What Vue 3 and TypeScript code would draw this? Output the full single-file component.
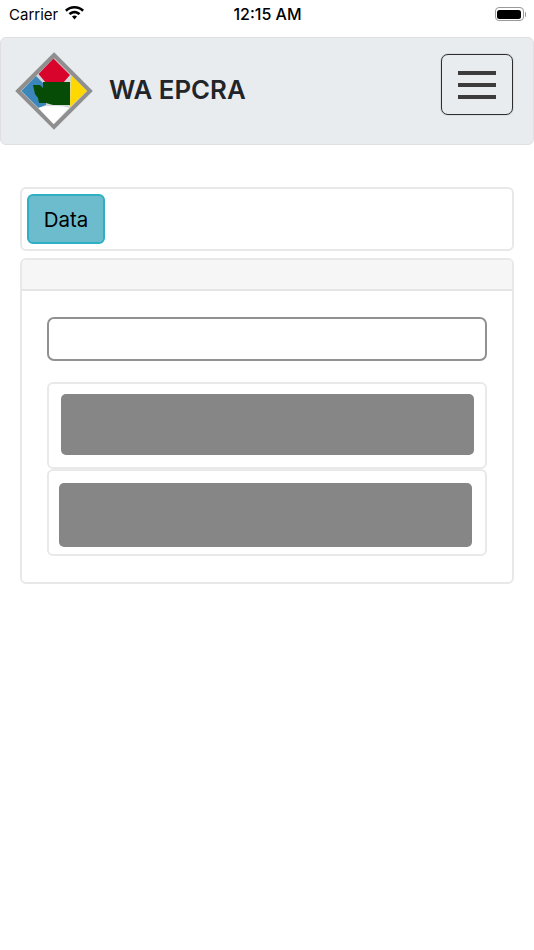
<template>
  <div class="page">
    <div class="status">
      <div class="status-left">
        <span>Carrier</span>
        <svg class="wifi" viewBox="0 0 19 14" width="19" height="14">
          <path d="M9.500 0C13.200 0 16.500 1.400 19 3.800L17.200 5.700C15.200 3.800 12.500 2.600 9.500 2.600C6.500 2.600 3.800 3.800 1.800 5.700L0 3.800C2.500 1.400 5.800 0 9.500 0Z" />
          <path d="M9.500 4.800C11.800 4.800 13.800 5.700 15.400 7.200L13.600 9.100C12.500 8 11.100 7.400 9.500 7.400C7.900 7.400 6.500 8 5.400 9.100L3.600 7.200C5.200 5.700 7.200 4.800 9.500 4.800Z" />
          <path d="M9.500 9.500C10.500 9.500 11.300 9.900 12 10.500L9.500 13.500L7 10.500C7.700 9.900 8.500 9.500 9.500 9.500Z" />
        </svg>
      </div>
      <span class="clock">12:15 AM</span>
      <div class="battery">
        <div class="battery-shell"><div class="battery-level"></div></div>
        <div class="battery-tip"></div>
      </div>
    </div>

    <nav class="navbar">
      <div class="brand">
        <svg class="logo" viewBox="0 0 78 78" width="78" height="78">
          <path class="logo-frame" d="M39 3 75 39 39 75 3 39Z" />
          <path fill="#d9042b" d="M38.500 6.500 55 23 48 31H31L23.500 22Z" />
          <path fill="#3b87bb" d="M21 24 31 34V53L23.500 56 6.500 39Z" />
          <path fill="#ffd800" d="M56 23 72 39 55 55Z" />
          <path fill="#ffffff" d="M23.500 56C30 53 46 53 54 56L38.500 72Z" />
          <path fill="#064c06" d="M18 33H25L28 36V30H55V53H38L31 51H24L23 46 20 42Z" />
        </svg>
        <span class="brand-name">WA EPCRA</span>
      </div>
      <button class="toggler" type="button" aria-label="Menu">
        <span></span><span></span><span></span>
      </button>
    </nav>

    <main class="content">
      <div class="card tabs">
        <button class="data-btn" type="button">Data</button>
      </div>
      <div class="card panel">
        <div class="panel-head"></div>
        <div class="panel-body">
          <input class="search" type="text" />
          <div class="list">
            <div class="item item-a"><div class="block block-a"></div></div>
            <div class="item item-b"><div class="block block-b"></div></div>
          </div>
        </div>
      </div>
    </main>
  </div>
</template>

<script setup lang="ts">
</script>

<style scoped>
.page {
  width: 534px;
  height: 950px;
  overflow: hidden;
  background: #fff;
  color: #000;
  font-family: Inter, "Liberation Sans", sans-serif;
}
.status {
  height: 37px;
  padding: 0 8px 9px 9px;
  display: grid;
  grid-template-columns: 1fr auto 1fr;
  align-items: center;
  box-sizing: border-box;
  font-size: 15px;
}
.status-left { display: flex; align-items: center; gap: 7px; }
.wifi { fill: #000; margin-top: -2px; }
.clock { font-size: 16px; font-weight: 500; }
.battery { display: flex; justify-content: flex-end; align-items: center; }
.battery-shell {
  width: 29px;
  height: 14px;
  box-sizing: border-box;
  border: 1px solid #999;
  border-radius: 4px;
  padding: 1.500px;
}
.battery-level { height: 100%; background: #000; border-radius: 2.500px; }
.battery-tip { width: 1.500px; height: 5px; background: #999; margin-left: 1px; border-radius: 0 1px 1px 0; }

.navbar {
  height: 108px;
  box-sizing: border-box;
  display: flex;
  align-items: center;
  justify-content: space-between;
  background: #e9ecef;
  border: 1px solid #dfdfe2;
  border-radius: 6px;
  padding: 0 20px 0 14px;
}
.brand { display: flex; align-items: center; gap: 16px; }
.logo { display: block; filter: blur(0.7px); }
.logo-frame { fill: #d4d7da; stroke: #8f8f8f; stroke-width: 4; }
.brand-name { font-size: 25.800px; font-weight: 600; color: #212529; margin-bottom: 4px; }
.toggler {
  width: 72px;
  height: 61px;
  box-sizing: border-box;
  padding: 0;
  align-self: flex-start;
  margin-top: 16px;
  background: transparent;
  border: 1px solid #2e2e2e;
  box-shadow: 0 0 1px #555;
  border-radius: 7px;
  display: flex;
  flex-direction: column;
  align-items: center;
  justify-content: center;
  gap: 8px;
}
.toggler span { display: block; width: 38px; height: 4px; background: #3c3c3c; }

.content {
  padding: 42px 20px 0;
  display: flex;
  flex-direction: column;
  gap: 7px;
}
.card {
  box-sizing: border-box;
  border: 2px solid #e8e8e8;
  border-radius: 6px;
  background: #fff;
}
.tabs { height: 64px; padding: 5px; }
.data-btn {
  width: 78px;
  height: 50px;
  box-sizing: border-box;
  background: #6cbccd;
  border: 2px solid #2eafc4;
  border-radius: 6px;
  font-family: inherit;
  font-size: 20.500px;
  color: #000;
  padding: 0;
}
.panel { height: 326px; overflow: hidden; }
.panel-head {
  height: 31px;
  background: #f6f6f6;
  border-bottom: 2px solid #e4e4e4;
  box-sizing: border-box;
}
.panel-body { padding: 26px 25px 0; }
.search {
  display: block;
  width: 100%;
  height: 44px;
  box-sizing: border-box;
  border: 2px solid #919191;
  border-radius: 7px;
  background: #fff;
  outline: none;
}
.list { margin-top: 21px; display: flex; flex-direction: column; }
.item {
  box-sizing: border-box;
  border: 2px solid #e9e9e9;
  border-radius: 6px;
  height: 87px;
}
.item-a { padding: 10px 11px 0 12px; }
.item-b { padding: 12px 13px 0 10px; }
.block { background: #868686; border-radius: 5px; }
.block-a { height: 61px; }
.block-b { height: 64px; }
</style>

<style>
html, body { background: #fff; }
</style>
